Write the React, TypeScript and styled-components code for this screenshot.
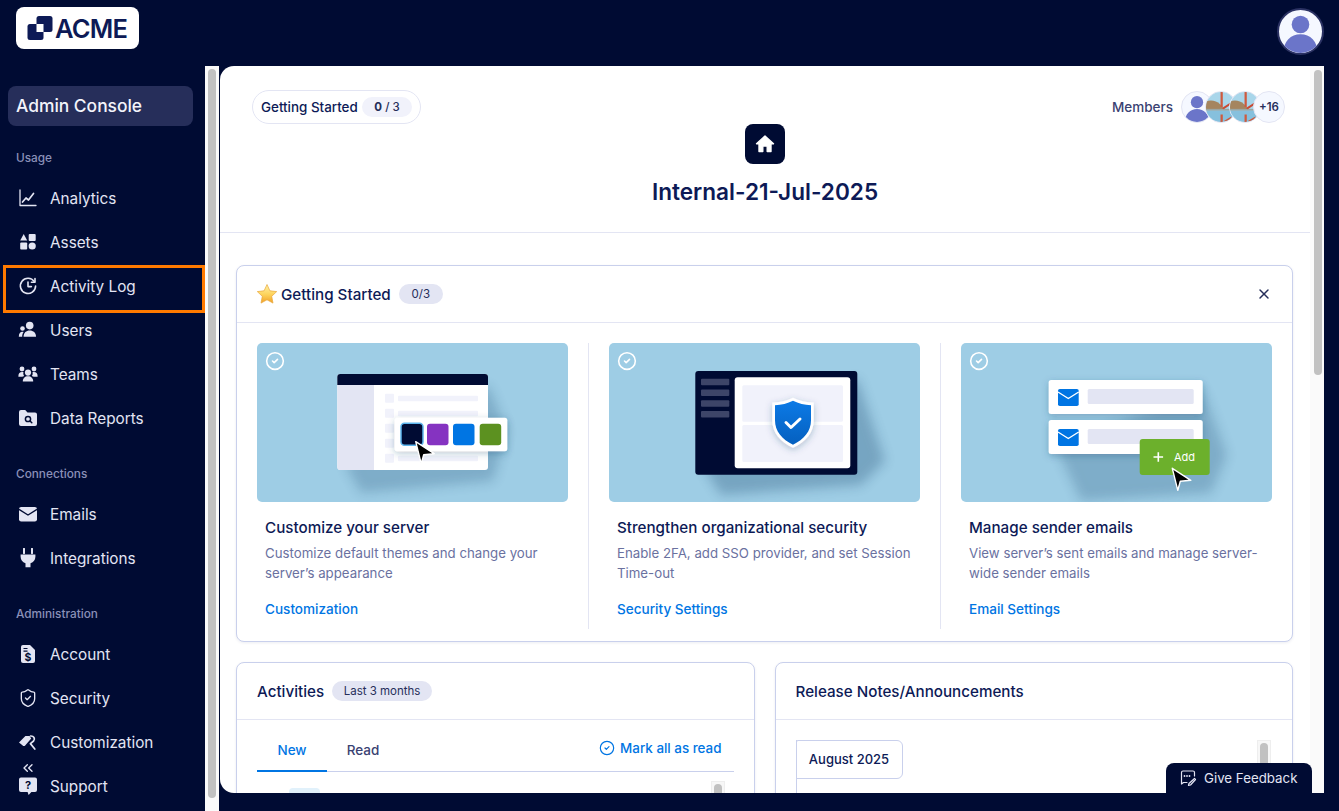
import React from "react";
import styled, { createGlobalStyle } from "styled-components";
import { ChevronsLeft, CircleCheck, ShieldCheck, X } from "lucide-react";

const GlobalStyle = createGlobalStyle`
  * { box-sizing: border-box; }
  html, body { margin: 0; height: 100%; overflow: hidden; }
  body { font-family: Inter, "Liberation Sans", sans-serif; background: #000b33; }
`;

const Page = styled.div`
  position: relative;
  height: 100vh;
  background: #000b33;
  display: flex;
  flex-direction: column;
  overflow: hidden;
`;

const TopBar = styled.header`
  height: 66px;
  flex: none;
  display: flex;
  justify-content: space-between;
  align-items: flex-start;
  padding: 7px 15px 0 16px;
`;

const Logo = styled.div`
  width: 123px;
  height: 42px;
  background: #fff;
  border-radius: 8px;
  display: flex;
  align-items: center;
  gap: 2px;
  padding-left: 11px;
`;

const LogoText = styled.span`
  font-size: 25.5px;
  font-weight: 600;
  letter-spacing: -0.8px;
  color: #0d1a56;
`;

const TopAvatar = styled.div`
  width: 47px;
  height: 47px;
  margin-top: 1px;
  border-radius: 50%;
  border: 2px solid #2b3263;
  background: #f5f8ff;
  overflow: hidden;
`;

const Body = styled.div`
  flex: 1;
  display: flex;
  min-height: 0;
`;

const Sidebar = styled.aside`
  position: relative;
  width: 205px;
  flex: none;
  padding-top: 20px;
  overflow: hidden;
`;

const ConsoleTitle = styled.div`
  margin: 0 12px 0 8px;
  height: 40px;
  border-radius: 8px;
  background: #262e5a;
  color: #f3f4fb;
  font-size: 17.4px;
  font-weight: 500;
  line-height: 40px;
  padding-left: 8px;
`;

const SectionLabel = styled.div<{ $first?: boolean }>`
  margin: ${(p) => (p.$first ? "24px" : "26px")} 0 10px 16px;
  height: 16px;
  line-height: 16px;
  font-size: 11.8px;
  font-weight: 500;
  color: #8a90b8;
`;

const NavItem = styled.div<{ $marked?: boolean }>`
  position: relative;
  height: 44px;
  display: flex;
  align-items: center;
  gap: 12px;
  padding-left: 18px;
  color: #e3e5f3;
  font-size: 15.3px;

  svg { flex: none; }

  ${(p) =>
    p.$marked &&
    `&::after {
      content: "";
      box-sizing: border-box;
      position: absolute;
      left: 3px;
      top: 1px;
      width: 202px;
      height: 48px;
      border: 3px solid #ff7a00;
    }`}
`;

const CollapseButton = styled.div`
  position: absolute;
  left: 20px;
  top: 694px;
  color: #e3e5f3;
  line-height: 0;
`;

const ScrollTrack = styled.div<{ $width?: number }>`
  flex: none;
  width: ${(p) => p.$width ?? 14}px;
  background: #fafafa;
  padding: 3px 3px 0;
`;

const ScrollThumb = styled.div<{ $height: number }>`
  height: ${(p) => p.$height}px;
  background: #c1c1c1;
  border-radius: 5px;
`;

const Main = styled.main`
  width: 1090px;
  flex: none;
  height: 727px;
  background: #fff;
  border-radius: 14px 0 0 14px;
  overflow: hidden;
  margin-left: 1px;
`;

const MainTrack = styled(ScrollTrack)`
  height: 727px;
  padding: 4px 2px 0 4px;
`;

const WorkspaceHeader = styled.section`
  height: 167px;
  border-bottom: 1px solid #e3e5f3;
  padding: 24px 25px 0;
  display: flex;
  flex-direction: column;
  align-items: center;
`;

const HeaderRow = styled.div`
  width: 100%;
  height: 34px;
  display: flex;
  justify-content: space-between;
  align-items: center;
`;

const ProgressPill = styled.div`
  height: 34px;
  width: 169px;
  margin-left: 7px;
  border: 1px solid #e3e5f3;
  border-radius: 17px;
  display: flex;
  align-items: center;
  justify-content: space-between;
  padding: 0 8px;
  font-size: 13.4px;
  font-weight: 500;
  color: #0d1a56;
`;

const ProgressCount = styled.span`
  width: 50px;
  height: 20px;
  line-height: 20px;
  text-align: center;
  border-radius: 10px;
  background: #f1f2fb;
  font-size: 11.5px;
  font-weight: 500;
  color: #262e5a;

  b { font-weight: 700; }
`;

const Members = styled.div`
  display: flex;
  align-items: center;
`;

const MembersLabel = styled.span`
  font-size: 13.5px;
  font-weight: 500;
  color: #3a4272;
  margin-right: 8px;
`;

const MemberCircle = styled.div`
  width: 32px;
  height: 32px;
  border-radius: 50%;
  border: 1px solid #e3e5f3;
  background: #f5f8ff;
  overflow: hidden;
  margin-left: -8px;
  display: flex;
  align-items: center;
  justify-content: center;
  font-size: 11.5px;
  font-weight: 600;
  color: #262e5a;

  &:first-of-type { margin-left: 0; }
`;

const HomeTile = styled.div`
  width: 40px;
  height: 40px;
  border-radius: 8px;
  background: #000b33;
  display: flex;
  align-items: center;
  justify-content: center;
`;

const WorkspaceTitle = styled.h1`
  margin: 12px 0 0;
  font-size: 22.6px;
  line-height: 32px;
  font-weight: 600;
  color: #0d1a56;
`;

const Content = styled.div`
  padding: 32px 17px 0 16px;
`;

const Card = styled.div`
  border: 1px solid #c9d0ec;
  border-radius: 8px;
  background: #fff;
  box-shadow: 0 1px 3px rgba(13, 26, 86, 0.08);
  overflow: hidden;
`;

const CardHead = styled.div`
  height: 57px;
  border-bottom: 1px solid #e3e5f3;
  display: flex;
  align-items: center;
  padding: 0 20px;
  font-size: 15.2px;
  font-weight: 500;
  color: #0d1a56;
`;

const HeadBadge = styled.span<{ $width: number; $left: number }>`
  width: ${(p) => p.$width}px;
  margin-left: ${(p) => p.$left}px;
  height: 20px;
  line-height: 20px;
  text-align: center;
  border-radius: 10px;
  background: #e3e5f3;
  font-size: 11.5px;
  font-weight: 400;
  color: #262e5a;
`;

const CloseButton = styled.div`
  margin-left: auto;
  color: #262e5a;
  line-height: 0;
`;

const Steps = styled.div`
  display: grid;
  grid-template-columns: 352px 352px 1fr;
  padding-top: 20px;
  height: 318px;
`;

const Step = styled.div<{ $last?: boolean }>`
  padding: 0 20px;
  height: 286px;
  border-right: ${(p) => (p.$last ? "none" : "1px solid #e3e5f3")};
`;

const StepImage = styled.div`
  position: relative;
  width: 311px;
  height: 159px;
  border-radius: 5px;
  background: #9ecde5;
  overflow: hidden;

  > svg.art { display: block; }
`;

const StepCheck = styled.div`
  position: absolute;
  left: 8px;
  top: 8px;
  color: #fff;
  line-height: 0;
`;

const StepText = styled.div`
  padding-left: 8px;
`;

const StepTitle = styled.div`
  margin-top: 16px;
  font-size: 15.2px;
  line-height: 20px;
  font-weight: 500;
  color: #0d1a56;
`;

const StepDesc = styled.div`
  margin-top: 5px;
  font-size: 13.25px;
  line-height: 20px;
  color: #6a719f;
`;

const StepLink = styled.div`
  margin-top: 16px;
  font-size: 13.55px;
  line-height: 20px;
  font-weight: 500;
  color: #0075e3;
`;

const Lower = styled.div`
  display: grid;
  grid-template-columns: 1fr 1fr;
  gap: 20px;
  margin-top: 20px;
`;

const LowerCard = styled(Card)`
  height: 300px;
`;

const TabsRow = styled.div`
  position: relative;
  margin: 0 20px;
  height: 52px;
  border-bottom: 1px solid #c9d0ec;
  display: flex;
`;

const Tab = styled.div<{ $active?: boolean }>`
  width: ${(p) => (p.$active ? "70px" : "72px")};
  height: 52px;
  text-align: center;
  line-height: 60px;
  font-size: 13.5px;
  font-weight: 500;
  color: ${(p) => (p.$active ? "#0075e3" : "#3a4272")};
  border-bottom: ${(p) => (p.$active ? "2px solid #0075e3" : "none")};
`;

const MarkRead = styled.div`
  margin-left: auto;
  padding: 18px 12px 0 0;
  display: flex;
  align-items: flex-start;
  gap: 5px;
  font-size: 13.4px;
  font-weight: 500;
  line-height: 20px;
  color: #0075e3;

  svg { margin-top: 2px; }
`;

const ActivityBody = styled.div`
  position: relative;
  height: 100px;
`;

const ActivityChip = styled.div`
  position: absolute;
  left: 52px;
  top: 16px;
  width: 31px;
  height: 30px;
  border-radius: 4px;
  background: #e1f1fb;
`;

const MiniTrack = styled.div`
  position: absolute;
  width: 14px;
  height: 60px;
  background: #f7f7f7;
  border: 1px solid #eeeeee;
  padding: 2px 2px 0;
`;

const ActivityTrack = styled(MiniTrack)`
  right: 29px;
  top: 9px;
`;

const ReleaseBody = styled.div`
  position: relative;
  margin: 20px 20px 0;
  height: 120px;
  border-left: 1px solid #c9d0ec;
`;

const MonthTab = styled.div`
  width: 107px;
  height: 39px;
  margin-left: -1px;
  border: 1px solid #c9d0ec;
  border-radius: 2px 6px 6px 0;
  text-align: center;
  line-height: 37px;
  font-size: 13px;
  font-weight: 500;
  color: #0d1a56;
`;

const ReleaseTrack = styled(MiniTrack)`
  right: 1px;
  top: 0;
`;

const Feedback = styled.div`
  position: absolute;
  right: 27px;
  bottom: 18px;
  width: 146px;
  height: 30px;
  border-radius: 8px 8px 0 0;
  background: #000b33;
  color: #e3e5f3;
  display: flex;
  align-items: center;
  gap: 7px;
  padding-left: 13px;
  font-size: 13.3px;
`;

const PersonGlyph = ({ size }: { size: number }) => (
  <svg width={size} height={size} viewBox="0 0 40 40" fill="#6b75c9">
    <circle cx="20" cy="13.5" r="8.2" />
    <path d="M4 40c0-11 7-17.5 16-17.5S36 29 36 40z" />
  </svg>
);

const BridgePhoto = () => (
  <svg width="32" height="32" viewBox="0 0 32 32">
    <rect width="32" height="32" fill="#a9d6ea" />
    <path d="M0 10c5-2 11-1 15 3l5 6H0z" fill="#a5855f" />
    <rect y="18" width="32" height="2" fill="#9aa6a3" />
    <rect y="20" width="32" height="12" fill="#86c0dd" />
    <path d="M15.500 0h2.400v16h-2.400zM15.500 24h2.400v8h-2.400z" fill="#cf5a3e" />
    <path d="M17 17L31 8v2.400L19 18.500z" fill="#c94a33" />
    <path d="M19 31l8-5v2l-5 4z" fill="#cf5a3e" />
  </svg>
);

const AcmeMark = () => (
  <svg width="26" height="26" viewBox="0 0 26 26">
    <rect x="9.500" y="1" width="16" height="16" rx="2.500" fill="#0d1a56" />
    <rect x="0.500" y="9" width="16" height="16" rx="2.500" fill="#0d1a56" />
    <rect x="9.500" y="9" width="7" height="8" fill="#fff" />
  </svg>
);

const AnalyticsIcon = () => (
  <svg width="20" height="20" viewBox="0 0 20 20" fill="none" stroke="currentColor" strokeWidth="1.3" strokeLinecap="round" strokeLinejoin="round">
    <path d="M2 2v15.500h16" />
    <path d="M4.500 14l3.500-4 2.500 2 5-6.500" strokeWidth="1.700" />
  </svg>
);

const AssetsIcon = () => (
  <svg width="20" height="20" viewBox="0 0 20 20" fill="currentColor">
    <path d="M5.700 2l3.500 6.500H2.200z" />
    <rect x="10.700" y="2" width="7" height="7" rx="1" />
    <rect x="2.200" y="10.500" width="7" height="7" rx="1" />
    <circle cx="14.200" cy="14" r="3.600" />
  </svg>
);

const ActivityIcon = () => (
  <svg width="20" height="20" viewBox="0 0 20 20" fill="none" stroke="currentColor" strokeWidth="1.600" strokeLinecap="round" strokeLinejoin="round">
    <path d="M16.300 5.600A7.600 7.600 0 1 0 17.600 10" />
    <path d="M17 2.600v3.600h-3.600" />
    <path d="M10 6v4.600h3.400" />
  </svg>
);

const UsersIcon = () => (
  <svg width="20" height="20" viewBox="0 0 20 20" fill="currentColor">
    <circle cx="11.700" cy="5.600" r="3.800" />
    <path d="M5.600 16.800c0-4 2.600-6.200 6.100-6.200s6.300 2.200 6.300 6.200z" />
    <circle cx="4.500" cy="8.500" r="2.300" />
    <path d="M.8 16.800c0-3.200 1.500-5 3.600-5 .5 0 .9.1 1.200.2-.9 1.100-1.400 2.800-1.400 4.800z" />
  </svg>
);

const TeamsIcon = () => (
  <svg width="20" height="20" viewBox="0 0 20 20" fill="currentColor">
    <circle cx="10" cy="8.600" r="3.100" />
    <path d="M4.800 17.600c0-3.400 2-5.300 5.200-5.300s5.200 1.900 5.200 5.300z" />
    <circle cx="4" cy="5" r="2.400" />
    <circle cx="16" cy="5" r="2.400" />
    <path d="M.4 12c0-2.600 1.400-4 3.600-4 .6 0 1.100.1 1.500.3-.5 2 0 3 .7 3.600-1 .3-1.600.5-2 .9H.4zM19.600 12c0-2.600-1.400-4-3.600-4-.6 0-1.100.1-1.500.3.5 2 0 3-.7 3.600 1 .3 1.600.5 2 .9h3.800z" />
  </svg>
);

const ReportsIcon = () => (
  <svg width="20" height="20" viewBox="0 0 20 20">
    <path d="M1 4a2 2 0 012-2h4.200l2.300 2.600H17a2 2 0 012 2V16a2 2 0 01-2 2H3a2 2 0 01-2-2z" fill="currentColor" />
    <circle cx="10" cy="11" r="2.600" fill="none" stroke="#000b33" strokeWidth="1.500" />
    <path d="M12 13l1.800 1.800" stroke="#000b33" strokeWidth="1.500" strokeLinecap="round" />
  </svg>
);

const EmailsIcon = () => (
  <svg width="20" height="20" viewBox="0 0 20 20">
    <rect x="1" y="3" width="18" height="14.500" rx="2.200" fill="currentColor" />
    <path d="M1 5.400l9 5.600 9-5.600" fill="none" stroke="#000b33" strokeWidth="1.300" />
  </svg>
);

const PlugIcon = () => (
  <svg width="20" height="20" viewBox="0 0 20 20" fill="currentColor">
    <path d="M6 .8v4.400M14 .8v4.400" stroke="currentColor" strokeWidth="2" strokeLinecap="round" />
    <path d="M2.600 6.400h14.800v2.400a7 7 0 01-4.900 6.400v4H7.500v-4a7 7 0 01-4.900-6.400z" />
  </svg>
);

const AccountIcon = () => (
  <svg width="20" height="20" viewBox="0 0 20 20">
    <path d="M5 1h7l5 5v11a2 2 0 01-2 2H5a2 2 0 01-2-2V3a2 2 0 012-2z" fill="currentColor" />
    <path d="M5.500 4.500h4M5.500 7.200h4" stroke="#000b33" strokeWidth="1.200" />
    <text x="10" y="17" textAnchor="middle" fontSize="10.500" fontWeight="700" fill="#000b33">$</text>
  </svg>
);

const BrushIcon = () => (
  <svg width="20" height="20" viewBox="0 0 20 20">
    <path d="M1 10.600L7.400 4h4.200l1.600 2.600-5.800 6.600a2 2 0 01-3 0z" fill="currentColor" />
    <path d="M12.600 4c3-.2 5 2.600 3 5l-3.200 2.600 4.400 5.400" fill="none" stroke="currentColor" strokeWidth="1.700" strokeLinecap="round" strokeLinejoin="round" />
  </svg>
);

const SupportIcon = () => (
  <svg width="20" height="20" viewBox="0 0 20 20">
    <path d="M3 1.500h14a2 2 0 012 2V14a2 2 0 01-2 2h-3.600L10.600 19 9.600 16H3a2 2 0 01-2-2V3.500a2 2 0 012-2z" fill="currentColor" />
    <text x="10" y="12.800" textAnchor="middle" fontSize="11" fontWeight="700" fill="#000b33">?</text>
  </svg>
);

const HomeIcon = () => (
  <svg width="22" height="22" viewBox="0 0 22 22" fill="#fff" stroke="#fff" strokeWidth="1.400" strokeLinejoin="round">
    <path d="M11 3l8.500 7.800h-2.500V18.500h-3.800V13H8.800v5.500H5V10.800H2.500z" />
  </svg>
);

const StarIcon = () => (
  <svg width="22" height="22" viewBox="0 0 22 22" style={{ marginLeft: -1, marginRight: 3 }}>
    <defs>
      <linearGradient id="star" x1="0" y1="0" x2="0" y2="1">
        <stop offset="0" stopColor="#fff3a8" />
        <stop offset="0.55" stopColor="#fdd25a" />
        <stop offset="1" stopColor="#f0a029" />
      </linearGradient>
    </defs>
    <path d="M11 1.500l2.900 6.300 6.800.8-5 4.700 1.300 6.800L11 16.800l-6 3.300 1.300-6.800-5-4.700 6.800-.8z" fill="url(#star)" stroke="#e8a63a" strokeWidth=".7" strokeLinejoin="round" />
  </svg>
);

const FeedbackIcon = () => (
  <svg width="18" height="18" viewBox="0 0 18 18" fill="none" stroke="currentColor" strokeWidth="1.200" strokeLinecap="round" strokeLinejoin="round">
    <path d="M8 13.500H4.500L2.500 15V3.500a1.500 1.500 0 011.500-1.500h10a1.500 1.500 0 011.500 1.500V7" />
    <path d="M5.500 7h.01M8 7h.01M10.500 7h.01" strokeWidth="1.800" />
    <path d="M15.500 9.500l1 1-5 5.500-2 .5.500-2z" />
  </svg>
);

const Shadow = ({ d, opacity }: { d: string; opacity: number }) => (
  <path d={d} fill="#1d4a70" opacity={opacity} filter="url(#soft)" />
);

const ArtDefs = () => (
  <defs>
    <filter id="soft" x="-30%" y="-30%" width="160%" height="160%">
      <feGaussianBlur stdDeviation="6" />
    </filter>
    <filter id="lift" x="-30%" y="-30%" width="160%" height="160%">
      <feDropShadow dx="0" dy="2" stdDeviation="3.500" floodColor="#1d4a70" floodOpacity="0.3" />
    </filter>
    <linearGradient id="shieldFill" x1="0" y1="0" x2="0" y2="1">
      <stop offset="0" stopColor="#0c7ae6" />
      <stop offset="1" stopColor="#0560bf" />
    </linearGradient>
  </defs>
);

const Pointer = ({ x, y }: { x: number; y: number }) => (
  <path
    transform={`translate(${x} ${y})`}
    d="M0 0L18.500 12 8 13 5.500 22z"
    fill="#000"
    stroke="#fff"
    strokeWidth="1.400"
    strokeLinejoin="round"
  />
);

const CustomizeArt = () => {
  const rows = [50.7, 65.7, 80.7, 95.7, 110.7];
  return (
    <svg className="art" width="311" height="159" viewBox="0 0 311 159">
      <ArtDefs />
      <Shadow d="M88 122L231 42 250 88 236 138 104 150z" opacity={0.24} />
      <rect x="80.300" y="31" width="150.700" height="96" rx="3" fill="#fff" />
      <path d="M80.300 42H117V127H83.300a3 3 0 01-3-3z" fill="#e3e5f3" />
      <path d="M83.300 31H228a3 3 0 013 3V42H80.300V34a3 3 0 013-3z" fill="#000b33" />
      {rows.map((y) => (
        <g key={y} fill="#f1f2fb">
          <rect x="128" y={y} width="9" height="9" rx="1" />
          <rect x="141" y={y + 2} width="80" height="5.500" rx="1" />
        </g>
      ))}
      <g filter="url(#lift)">
        <rect x="137.700" y="74.700" width="112.600" height="33.600" rx="2.500" fill="#fff" />
      </g>
      <rect x="144" y="80.300" width="22" height="22" rx="3.500" fill="#000b33" stroke="#5cb6ee" strokeWidth="1.500" />
      <rect x="170" y="80.700" width="21.500" height="21.500" rx="3" fill="#8533c1" />
      <rect x="196" y="80.700" width="21.500" height="21.500" rx="3" fill="#0075e3" />
      <rect x="222.700" y="80.700" width="21.500" height="21.500" rx="3" fill="#5c9120" />
      <Pointer x={158.700} y={98.700} />
    </svg>
  );
};

const SecurityArt = () => (
  <svg className="art" width="311" height="159" viewBox="0 0 311 159">
    <ArtDefs />
    <Shadow d="M95 125L248 35 276 118 252 142 112 152z" opacity={0.3} />
    <rect x="86.300" y="28" width="162" height="103.700" rx="3" fill="#000b33" />
    {[35.7, 46.5, 57.3, 68].map((y) => (
      <rect key={y} x="92" y={y} width="28.300" height="6.500" rx="1" fill="#3d4568" />
    ))}
    <rect x="125.700" y="34.300" width="115.600" height="91" rx="3" fill="#fff" />
    <rect x="133.300" y="42.300" width="100.700" height="36.400" rx="1.500" fill="#f1f2fb" />
    <rect x="133.300" y="82" width="100.700" height="37" rx="1.500" fill="#f1f2fb" />
    <g filter="url(#lift)">
      <path d="M184 54.700c6 3 13 4.800 20.700 4.800v18c0 12-8 21.500-20.700 27.200-12.700-5.700-20.700-15.200-20.700-27.200v-18c7.700 0 14.700-1.800 20.700-4.800z" fill="#fff" />
    </g>
    <path d="M184 57.700c5.500 2.700 11.500 4.300 18 4.500v15.300c0 10.500-7 19-18 24.200-11-5.200-18-13.700-18-24.200V62.200c6.500-.2 12.500-1.800 18-4.500z" fill="url(#shieldFill)" />
    <path d="M177 79.500l5 5 9-8.500" fill="none" stroke="#fff" strokeWidth="3" strokeLinecap="round" strokeLinejoin="round" />
  </svg>
);

const MailGlyph = ({ y }: { y: number }) => (
  <g transform={`translate(97 ${y})`}>
    <rect width="20.700" height="17" rx="1.800" fill="#0075e3" />
    <path d="M0 3l10.300 6.500L20.700 3" fill="none" stroke="#fff" strokeWidth="1.400" />
  </g>
);

const SenderArt = () => (
  <svg className="art" width="311" height="159" viewBox="0 0 311 159">
    <ArtDefs />
    <Shadow d="M96 106L241 45 266 112 250 150 120 158z" opacity={0.24} />
    <g filter="url(#lift)">
      <rect x="87.700" y="37" width="154" height="34" rx="2.500" fill="#fff" />
      <rect x="87.700" y="77" width="154" height="34" rx="2.500" fill="#fff" />
    </g>
    <MailGlyph y={46} />
    <MailGlyph y={86} />
    <rect x="126.700" y="46" width="106" height="15" rx="1.500" fill="#e3e5f3" />
    <rect x="126.700" y="86" width="106" height="15" rx="1.500" fill="#e3e5f3" />
    <rect x="178.700" y="96" width="70" height="36" rx="3" fill="#6cb02c" />
    <path d="M192.500 114h9.600M197.300 109.200v9.600" stroke="#fff" strokeWidth="1.600" />
    <text x="213" y="118" fontSize="11" fontWeight="400" fill="#fff" fontFamily="Inter, sans-serif">Add</text>
    <Pointer x={211.300} y={125.300} />
  </svg>
);

type NavEntry = { label: string; icon: React.ReactNode; marked?: boolean };

const usage: NavEntry[] = [
  { label: "Analytics", icon: <AnalyticsIcon /> },
  { label: "Assets", icon: <AssetsIcon /> },
  { label: "Activity Log", icon: <ActivityIcon />, marked: true },
  { label: "Users", icon: <UsersIcon /> },
  { label: "Teams", icon: <TeamsIcon /> },
  { label: "Data Reports", icon: <ReportsIcon /> },
];

const connections: NavEntry[] = [
  { label: "Emails", icon: <EmailsIcon /> },
  { label: "Integrations", icon: <PlugIcon /> },
];

const administration: NavEntry[] = [
  { label: "Account", icon: <AccountIcon /> },
  { label: "Security", icon: <ShieldCheck size={20} strokeWidth={1.6} /> },
  { label: "Customization", icon: <BrushIcon /> },
  { label: "Support", icon: <SupportIcon /> },
];

const steps = [
  {
    title: "Customize your server",
    desc: "Customize default themes and change your server’s appearance",
    link: "Customization",
    art: <CustomizeArt />,
  },
  {
    title: "Strengthen organizational security",
    desc: "Enable 2FA, add SSO provider, and set Session Time-out",
    link: "Security Settings",
    art: <SecurityArt />,
  },
  {
    title: "Manage sender emails",
    desc: "View server’s sent emails and manage server-wide sender emails",
    link: "Email Settings",
    art: <SenderArt />,
  },
];

const NavGroup = ({ items }: { items: NavEntry[] }) => (
  <>
    {items.map((item) => (
      <NavItem key={item.label} $marked={item.marked}>
        {item.icon}
        <span>{item.label}</span>
      </NavItem>
    ))}
  </>
);

export default function App() {
  return (
    <Page>
      <GlobalStyle />
      <TopBar>
        <Logo>
          <AcmeMark />
          <LogoText>ACME</LogoText>
        </Logo>
        <TopAvatar>
          <PersonGlyph size={43} />
        </TopAvatar>
      </TopBar>

      <Body>
        <Sidebar>
          <ConsoleTitle>Admin Console</ConsoleTitle>
          <SectionLabel $first>Usage</SectionLabel>
          <NavGroup items={usage} />
          <SectionLabel>Connections</SectionLabel>
          <NavGroup items={connections} />
          <SectionLabel>Administration</SectionLabel>
          <NavGroup items={administration} />
          <CollapseButton>
            <ChevronsLeft size={16} strokeWidth={2} />
          </CollapseButton>
        </Sidebar>
        <ScrollTrack>
          <ScrollThumb $height={729} />
        </ScrollTrack>

        <Main>
          <WorkspaceHeader>
            <HeaderRow>
              <ProgressPill>
                Getting Started
                <ProgressCount>
                  <b>0</b> / 3
                </ProgressCount>
              </ProgressPill>
              <Members>
                <MembersLabel>Members</MembersLabel>
                <MemberCircle>
                  <PersonGlyph size={30} />
                </MemberCircle>
                <MemberCircle>
                  <BridgePhoto />
                </MemberCircle>
                <MemberCircle>
                  <BridgePhoto />
                </MemberCircle>
                <MemberCircle>+16</MemberCircle>
              </Members>
            </HeaderRow>
            <HomeTile>
              <HomeIcon />
            </HomeTile>
            <WorkspaceTitle>Internal-21-Jul-2025</WorkspaceTitle>
          </WorkspaceHeader>

          <Content>
            <Card>
              <CardHead>
                <StarIcon />
                Getting Started
                <HeadBadge $width={44} $left={8}>0/3</HeadBadge>
                <CloseButton>
                  <X size={16} strokeWidth={2.2} />
                </CloseButton>
              </CardHead>
              <Steps>
                {steps.map((step, i) => (
                  <Step key={step.title} $last={i === steps.length - 1}>
                    <StepImage>
                      {step.art}
                      <StepCheck>
                        <CircleCheck size={20} strokeWidth={1.9} />
                      </StepCheck>
                    </StepImage>
                    <StepText>
                      <StepTitle>{step.title}</StepTitle>
                      <StepDesc>{step.desc}</StepDesc>
                      <StepLink>{step.link}</StepLink>
                    </StepText>
                  </Step>
                ))}
              </Steps>
            </Card>

            <Lower>
              <LowerCard>
                <CardHead>
                  Activities
                  <HeadBadge $width={100} $left={8}>Last 3 months</HeadBadge>
                </CardHead>
                <TabsRow>
                  <Tab $active>New</Tab>
                  <Tab>Read</Tab>
                  <MarkRead>
                    <CircleCheck size={16} strokeWidth={1.8} />
                    Mark all as read
                  </MarkRead>
                </TabsRow>
                <ActivityBody>
                  <ActivityChip />
                  <ActivityTrack>
                    <ScrollThumb $height={40} />
                  </ActivityTrack>
                </ActivityBody>
              </LowerCard>
              <LowerCard>
                <CardHead>Release Notes/Announcements</CardHead>
                <ReleaseBody>
                  <MonthTab>August 2025</MonthTab>
                  <ReleaseTrack>
                    <ScrollThumb $height={40} />
                  </ReleaseTrack>
                </ReleaseBody>
              </LowerCard>
            </Lower>
          </Content>
        </Main>
        <MainTrack>
          <ScrollThumb $height={305} />
        </MainTrack>
      </Body>

      <Feedback>
        <FeedbackIcon />
        Give Feedback
      </Feedback>
    </Page>
  );
}
